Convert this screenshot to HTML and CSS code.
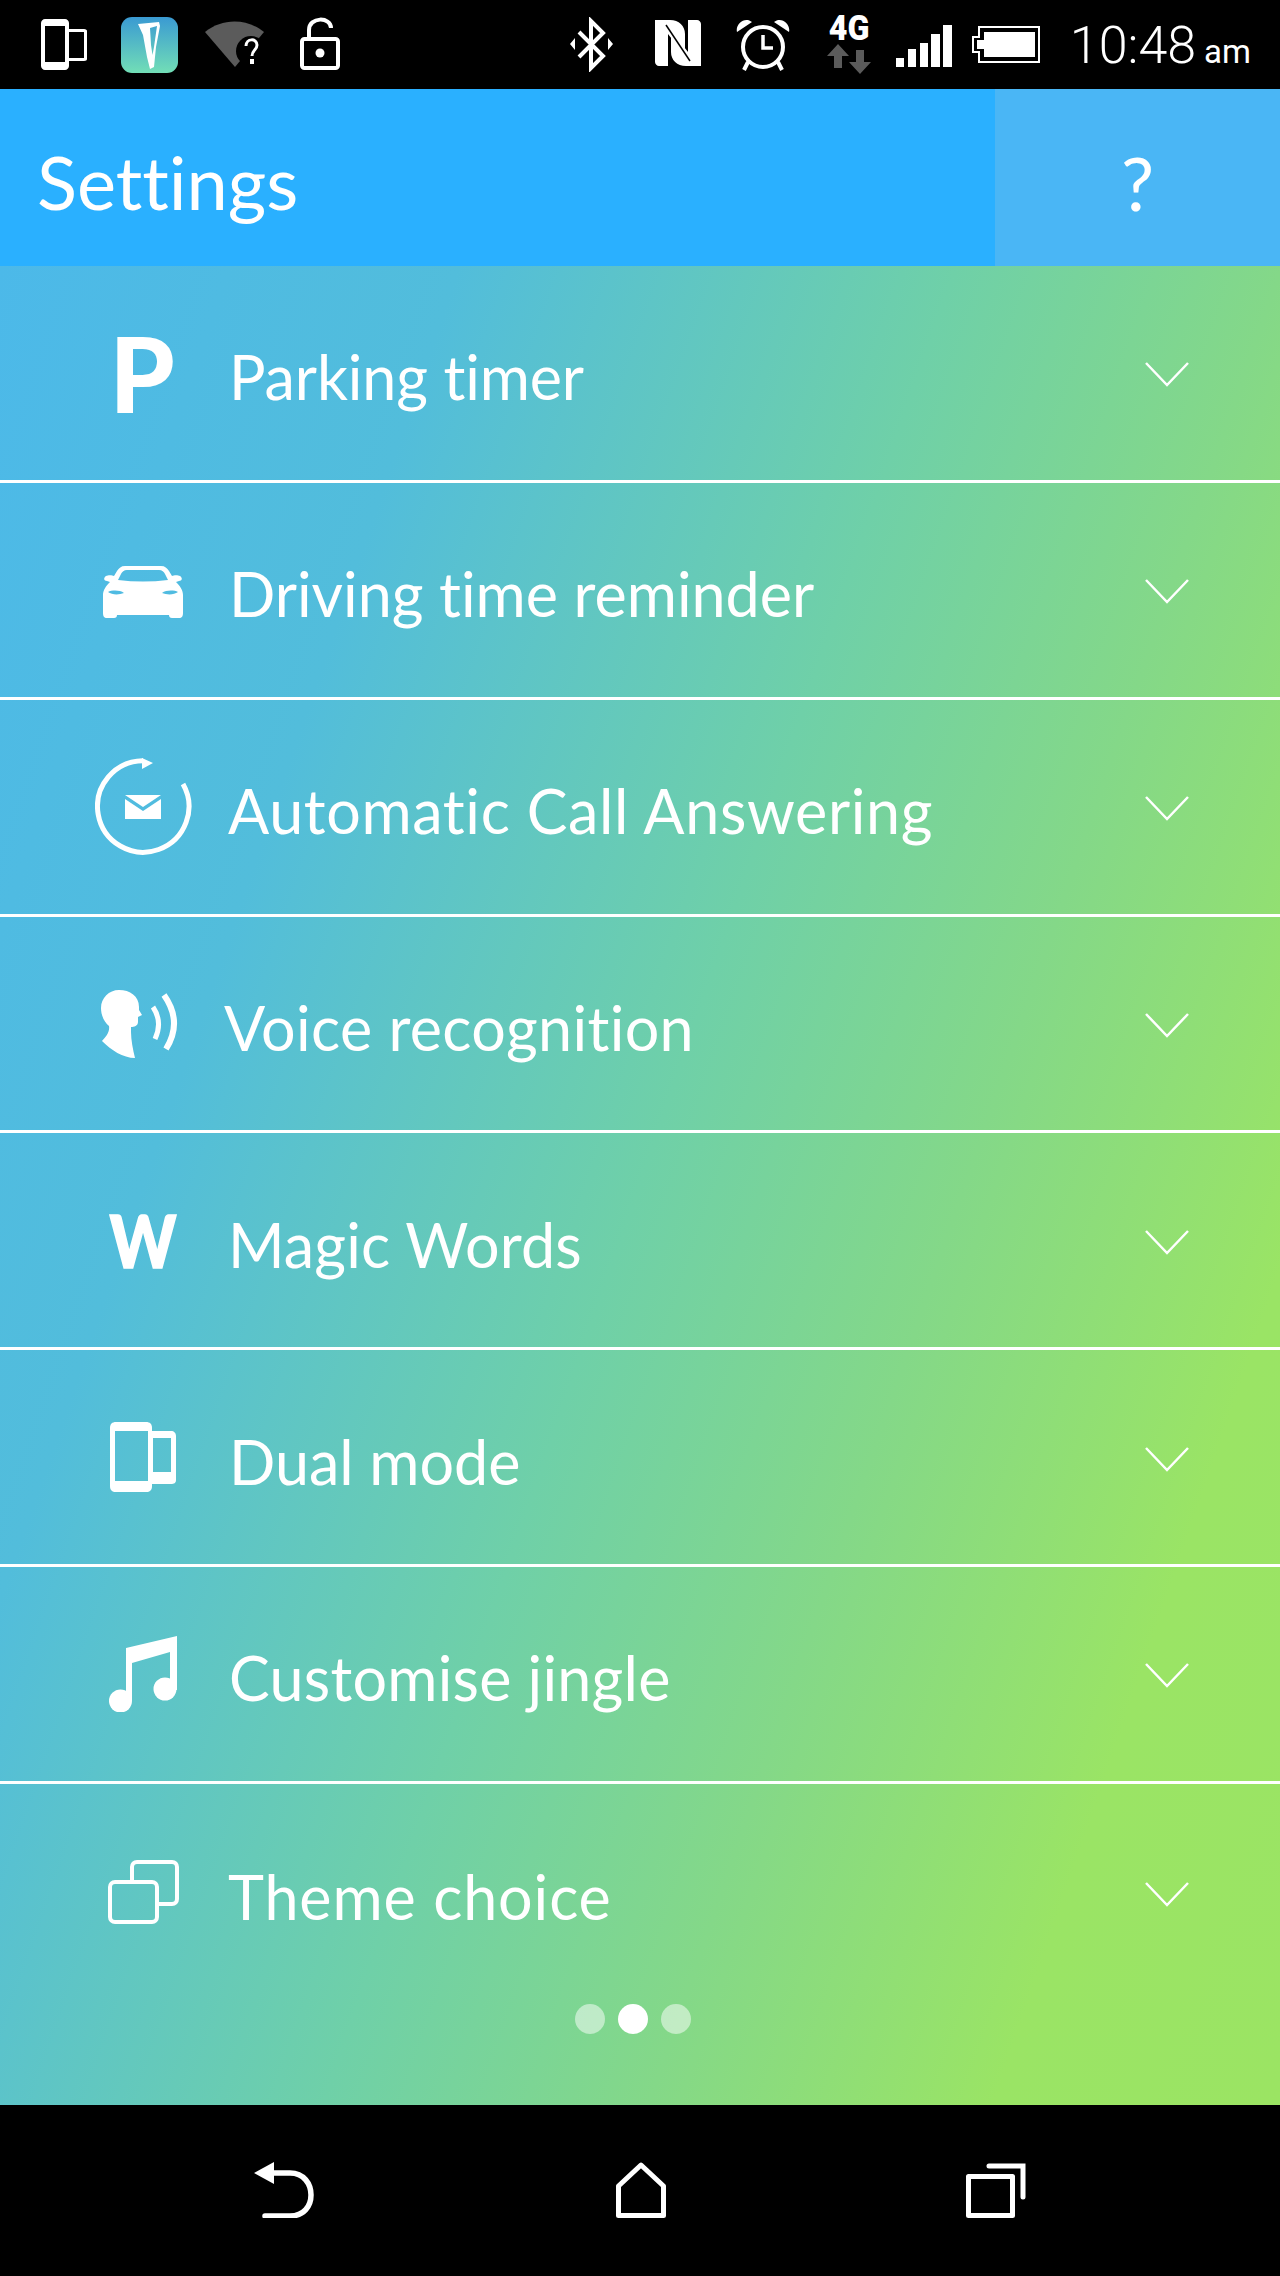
FILE: index.html
```html
<!DOCTYPE html>
<html lang="en">
<head>
    <meta charset="UTF-8">
    <meta name="viewport" content="width=device-width, initial-scale=1.0">
    <title>Settings</title>
    <link rel="stylesheet" href="styles.css">
</head>
<body>
<div class="status-bar">
    <div class="status-left">
        <svg class="st-dual" viewBox="0 0 46 51"><path fill="#fff" fill-rule="evenodd" d="M4 0H24C26 0 28 2 28 4V10H43C45 10 46 11 46 12V40C46 41 45 42 43 42H28V47C28 49 26 51 24 51H4C2 51 0 49 0 47V4C0 2 2 0 4 0ZM4 7V43H24V7ZM28 13V39H43V13Z"/></svg>
        <svg class="st-app" viewBox="0 0 57 56"><defs><linearGradient id="appGrad" x1="0" y1="0" x2="0" y2="1"><stop offset="0" stop-color="#3a9ad2"/><stop offset="1" stop-color="#72deb6"/></linearGradient></defs><rect width="57" height="56" rx="11" fill="url(#appGrad)"/><path d="M17 7L38 5L39 9L35 30L33 50L29 52L26 40L22 18ZM29 11L36 9L33 30L31.500 38L30 28Z" fill="#fff" fill-rule="evenodd"/></svg>
        <svg class="st-wifi" viewBox="0 0 59 46"><path d="M0 11C17 -3 42 -3 59 11L30 46Z" fill="#5b5b5b"/><circle cx="46" cy="30" r="15" fill="#000"/><path d="M41 25C41 17 52 17 52 24C52 29 47 29 47 35" fill="none" stroke="#fff" stroke-width="3"/><rect x="45" y="38" width="4" height="5" fill="#fff"/></svg>
        <svg class="st-lock" viewBox="0 0 40 53" fill="none" stroke="#fff" stroke-width="4"><rect x="2" y="22" width="36" height="29" rx="2.5"/><path d="M9 21V13C9 -0.5 31 -0.5 31 11"/><circle cx="20" cy="36" r="4.5" fill="#fff" stroke="none"/></svg>
    </div>
    <div class="status-right">
        <svg class="st-bt" viewBox="0 0 43 55"><path d="M9 15L33 39L21 51V4L33 16L9 40" fill="none" stroke="#fff" stroke-width="4"/><path d="M0 27L5 21V33ZM43 27L38 21V33Z" fill="#fff"/></svg>
        <svg class="st-nfc" viewBox="0 0 46 46"><path d="M0 0H15C24 0 30 6 30 14V36L13 14V46H4C2 46 0 44 0 42Z" fill="#fff"/><path d="M46 46H31C22 46 16 40 16 32V10L33 32V0H42C44 0 46 2 46 4Z" fill="#fff"/><path d="M11 5L35 41" stroke="#000" stroke-width="1.5"/></svg>
        <svg class="st-alarm" viewBox="0 0 54 53"><circle cx="27" cy="29" r="20" fill="none" stroke="#fff" stroke-width="4"/><path d="M27 17V30H37" fill="none" stroke="#fff" stroke-width="3.5"/><path d="M1 14C-1 6 9 -2 16 4ZM53 14C55 6 45 -2 38 4Z" fill="#fff"/><path d="M12 44L8 52M42 44L46 52" stroke="#fff" stroke-width="4"/></svg>
        <div class="st-net">
            <span class="net-label">4G</span>
            <svg class="net-arrows" viewBox="0 0 44 30"><path d="M11 0L22 12H15V24H7V12H0ZM33 30L44 18H37V6H29V18H22Z" fill="#5b5b5b"/></svg>
        </div>
        <div class="st-signal">
            <span class="sig sig-1"></span>
            <span class="sig sig-2"></span>
            <span class="sig sig-3"></span>
            <span class="sig sig-4"></span>
            <span class="sig sig-5"></span>
        </div>
        <svg class="st-battery" viewBox="0 0 68 37"><path d="M7 1H67V36H7V26H1V11H7Z" fill="none" stroke="#fff" stroke-width="2"/><rect x="12" y="6" width="51" height="25" fill="#fff"/><rect x="5" y="14" width="7" height="9" fill="#fff"/></svg>
        <div class="clock">10:48<span class="clock-am">am</span></div>
    </div>
</div>

<div class="app-bar">
    <div class="app-title">Settings</div>
    <div class="help-btn">?</div>
</div>

<div class="content">
    <div class="row">
        <div class="row-icon"><span class="icon-letter letter-p">P</span></div>
        <div class="row-label label-parking">Parking timer</div>
        <svg class="chevron" viewBox="0 0 44 25"><path d="M1 1L22 23L43 1" /></svg>
    </div>
    <div class="row">
        <div class="row-icon">
            <svg class="ic-car" viewBox="0 0 80 52"><path fill-rule="evenodd" fill="#fff" d="M22 0H58C62 0 64 2 66 5L69 10C71 9 75 9 77 10C80 12 79 15 76 15L73 16C77 20 80 24 80 29V47C80 50 79 52 76 52H69C67 52 66 51 66 49H14C14 51 13 52 11 52H4C1 52 0 50 0 47V29C0 24 3 20 7 16L4 15C1 15 0 12 3 10C5 9 9 9 11 10L14 5C16 2 18 0 22 0ZM24 4C21 4 19 6 18 8L15 14Q40 17 65 14L62 8C61 6 59 4 56 4ZM5 26C9 29 16 29 21 27C17 24 9 24 5 26ZM75 26C71 29 64 29 59 27C63 24 71 24 75 26Z"/></svg>
        </div>
        <div class="row-label">Driving time reminder</div>
        <svg class="chevron" viewBox="0 0 44 25"><path d="M1 1L22 23L43 1" /></svg>
    </div>
    <div class="row">
        <div class="row-icon">
            <svg class="ic-answer" viewBox="0 0 97 97"><path d="M88 26A45.700 45.700 0 1 1 48 2.800" fill="none" stroke="#fff" stroke-width="5"/><path d="M47 0L58 5L47 11Z" fill="#fff"/><path d="M30 37H66L48 49ZM30 41V61H66V41L48 53Z" fill="#fff"/></svg>
        </div>
        <div class="row-label label-answer">Automatic Call Answering</div>
        <svg class="chevron" viewBox="0 0 44 25"><path d="M1 1L22 23L43 1" /></svg>
    </div>
    <div class="row">
        <div class="row-icon">
            <svg class="ic-voice" viewBox="0 0 77 69"><path fill="#fff" d="M18 0C29 0 38 6 38 17L38 20L41 25L37 27L37 32C37 36 33 37 30 37L30 42C30 50 32 60 34 68C22 68 10 60 1 51C5 47 9 42 8 36C3 32 0 25 0 18C0 8 8 0 18 0Z"/><path d="M52 17Q62 32 54 49" fill="none" stroke="#fff" stroke-width="5"/><path d="M63 5Q82 32 65 59" fill="none" stroke="#fff" stroke-width="6"/></svg>
        </div>
        <div class="row-label label-voice">Voice recognition</div>
        <svg class="chevron" viewBox="0 0 44 25"><path d="M1 1L22 23L43 1" /></svg>
    </div>
    <div class="row">
        <div class="row-icon"><span class="icon-letter letter-w">W</span></div>
        <div class="row-label label-magic">Magic Words</div>
        <svg class="chevron" viewBox="0 0 44 25"><path d="M1 1L22 23L43 1" /></svg>
    </div>
    <div class="row">
        <div class="row-icon">
            <svg class="ic-dual" viewBox="0 0 66 70"><path fill="#fff" fill-rule="evenodd" d="M6 0H36C40 0 42 2 42 6V9H61C64 9 66 11 66 14V58C66 61 64 62 61 62H42V64C42 68 40 70 36 70H6C2 70 0 68 0 64V6C0 2 2 0 6 0ZM5 9V59H38V9ZM43 16V50H61V16Z"/></svg>
        </div>
        <div class="row-label">Dual mode</div>
        <svg class="chevron" viewBox="0 0 44 25"><path d="M1 1L22 23L43 1" /></svg>
    </div>
    <div class="row">
        <div class="row-icon">
            <svg class="ic-music" viewBox="0 0 68 76"><path fill="#fff" d="M17 12L68 0V54H61V16L23 27V65H17Z"/><circle cx="11.500" cy="65" r="11.500" fill="#fff"/><circle cx="56" cy="53" r="11.500" fill="#fff"/></svg>
        </div>
        <div class="row-label label-jingle">Customise jingle</div>
        <svg class="chevron" viewBox="0 0 44 25"><path d="M1 1L22 23L43 1" /></svg>
    </div>
    <div class="row row-last">
        <div class="row-icon">
            <svg class="ic-theme" viewBox="0 0 71 64" fill="none" stroke="#fff" stroke-width="4"><path d="M24 21V7C24 4 26 2 29 2H64C67 2 69 4 69 7V39C69 42 67 44 64 44H50"/><rect x="2" y="22" width="47" height="40" rx="5"/></svg>
        </div>
        <div class="row-label label-theme">Theme choice</div>
        <svg class="chevron" viewBox="0 0 44 25"><path d="M1 1L22 23L43 1" /></svg>
    </div>
    <div class="pager">
        <span class="dot"></span>
        <span class="dot active"></span>
        <span class="dot"></span>
    </div>
</div>

<div class="nav-bar">
    <svg class="nav-back" viewBox="0 0 61 56"><path d="M0 11L20 0V22Z" fill="#fff"/><path d="M16 11H36C50 11 57 22 57 33C57 44 50 54 36 54H11" fill="none" stroke="#fff" stroke-width="5.500" stroke-linecap="round"/></svg>
    <svg class="nav-home" viewBox="0 0 50 56"><path d="M25 3L47.500 24V53.500H2.500V24Z" fill="none" stroke="#fff" stroke-width="5" stroke-linejoin="round"/></svg>
    <svg class="nav-recent" viewBox="0 0 60 56"><rect x="2.500" y="14.500" width="44" height="39" fill="none" stroke="#fff" stroke-width="5" stroke-linejoin="round"/><path d="M23 4H57V35" fill="none" stroke="#fff" stroke-width="5" stroke-linecap="round"/></svg>
</div>
</body>
</html>
```

FILE: styles.css
```css
body {
    margin: 0;
    width: 1280px;
    height: 2276px;
    overflow: hidden;
    font-family: 'Lato', sans-serif;
    font-variant-ligatures: none;
    color: #fff;
    background-color: #000;
}

/* status bar */
.status-bar {
    height: 89px;
    display: flex;
    align-items: flex-start;
    justify-content: space-between;
    background-color: #000;
}

.status-left, .status-right {
    display: flex;
    align-items: flex-start;
}

.status-left {
    padding-left: 41px;
}

.status-right {
    padding-right: 29px;
}

.st-dual {
    width: 46px;
    height: 51px;
    margin-top: 19px;
}

.st-app {
    width: 57px;
    height: 56px;
    margin: 17px 0 0 34px;
}

.st-wifi {
    width: 59px;
    height: 46px;
    margin: 21px 0 0 27px;
}

.st-lock {
    width: 40px;
    height: 53px;
    margin: 17px 0 0 36px;
}

.st-bt {
    width: 43px;
    height: 55px;
    margin-top: 17px;
}

.st-nfc {
    width: 46px;
    height: 46px;
    margin: 20px 0 0 42px;
}

.st-alarm {
    width: 54px;
    height: 53px;
    margin: 18px 0 0 35px;
}

.st-net {
    width: 44px;
    margin: 14px 0 0 37px;
    display: flex;
    flex-direction: column;
    align-items: center;
}

.net-label {
    font-family: 'Roboto', sans-serif;
    font-weight: 900;
    font-size: 35px;
    line-height: 30px;
    height: 30px;
    transform: scaleX(0.92);
}

.net-arrows {
    width: 44px;
    height: 30px;
}

.st-signal {
    width: 56px;
    height: 42px;
    margin: 25px 0 0 25px;
    display: flex;
    align-items: flex-end;
    justify-content: space-between;
}

.sig {
    width: 8.500px;
    background-color: #fff;
}

.sig-1 { height: 9px; }
.sig-2 { height: 18px; }
.sig-3 { height: 24px; }
.sig-4 { height: 33px; }
.sig-5 { height: 42px; }

.st-battery {
    width: 68px;
    height: 37px;
    margin: 26px 0 0 20px;
}

.clock {
    margin: 16px 0 0 30px;
    font-family: 'Roboto', sans-serif;
    font-weight: 300;
    font-size: 52px;
    line-height: 60px;
    white-space: nowrap;
}

.clock-am {
    font-size: 33px;
    font-weight: 400;
    margin-left: 8px;
}

/* app bar */
.app-bar {
    height: 177px;
    display: flex;
    align-items: stretch;
    background-color: #2ab0ff;
}

.app-title {
    flex: 1;
    padding: 4px 0 0 37px;
    font-size: 74px;
    line-height: 177px;
    height: 173px;
}

.help-btn {
    width: 285px;
    padding-top: 5px;
    height: 172px;
    background-color: #4ab6f5;
    text-align: center;
    font-size: 74px;
    line-height: 177px;
}

/* settings list */
.content {
    height: 1839px;
    background: linear-gradient(109deg, #4cb9e9 0%, #52bddb 24%, #6fd0a8 50%, #84d888 67%, #9ae465 85%, #9be463 100%);
}

.row {
    height: 216.850px;
    box-sizing: border-box;
    display: flex;
    align-items: center;
    border-bottom: 3px solid #fff;
}

.row-last {
    border-bottom: none;
}

.row-icon {
    width: 170px;
    margin-left: 58px;
    display: flex;
    align-items: center;
    justify-content: center;
    flex-shrink: 0;
}

.row-label {
    flex: 1;
    padding-left: 1px;
    font-size: 61px;
    position: relative;
    top: 4px;
}

.label-parking {
    letter-spacing: -0.1px;
}

.label-answer {
    padding-left: 0;
    letter-spacing: 0.65px;
}

.label-voice {
    padding-left: 0;
    margin-left: -4px;
    letter-spacing: 0.35px;
}

.label-magic {
    padding-left: 0;
    letter-spacing: 0.15px;
}

.label-jingle {
    letter-spacing: 0.25px;
}

.label-theme {
    padding-left: 0;
    letter-spacing: 0.9px;
}

.icon-letter {
    font-weight: 900;
    line-height: 1;
}

.letter-p {
    font-size: 104px;
    margin-right: 2px;
}

.letter-w {
    font-size: 72px;
    transform: scaleX(0.88);
    -webkit-text-stroke: 1.500px #fff;
}

.ic-car {
    width: 80px;
    height: 52px;
    margin-top: 4px;
}

.ic-answer {
    width: 97px;
    height: 97px;
}

.ic-voice {
    width: 77px;
    height: 69px;
    margin: 3px 8px 0 0;
}

.ic-dual {
    width: 66px;
    height: 70px;
}

.ic-music {
    width: 68px;
    height: 76px;
    margin-top: 1px;
}

.ic-theme {
    width: 71px;
    height: 64px;
}

.chevron {
    width: 44px;
    height: 25px;
    margin: 4px 91px 0 0;
    fill: none;
    stroke: #fff;
    stroke-width: 2.500;
}

.pager {
    height: 30px;
    margin-top: 3px;
    display: flex;
    justify-content: center;
    gap: 13px;
    padding-right: 14px;
}

.dot {
    width: 30px;
    height: 30px;
    border-radius: 50%;
    background-color: rgba(255, 255, 255, 0.5);
}

.dot.active {
    background-color: #fff;
}

/* nav bar */
.nav-bar {
    height: 171px;
    background-color: #000;
    display: flex;
    align-items: flex-start;
    padding-top: 57px;
    box-sizing: border-box;
}

.nav-back {
    width: 61px;
    height: 56px;
    margin-left: 254px;
}

.nav-home {
    width: 50px;
    height: 56px;
    margin-left: 301px;
}

.nav-recent {
    width: 60px;
    height: 56px;
    margin-left: 300px;
}
```
